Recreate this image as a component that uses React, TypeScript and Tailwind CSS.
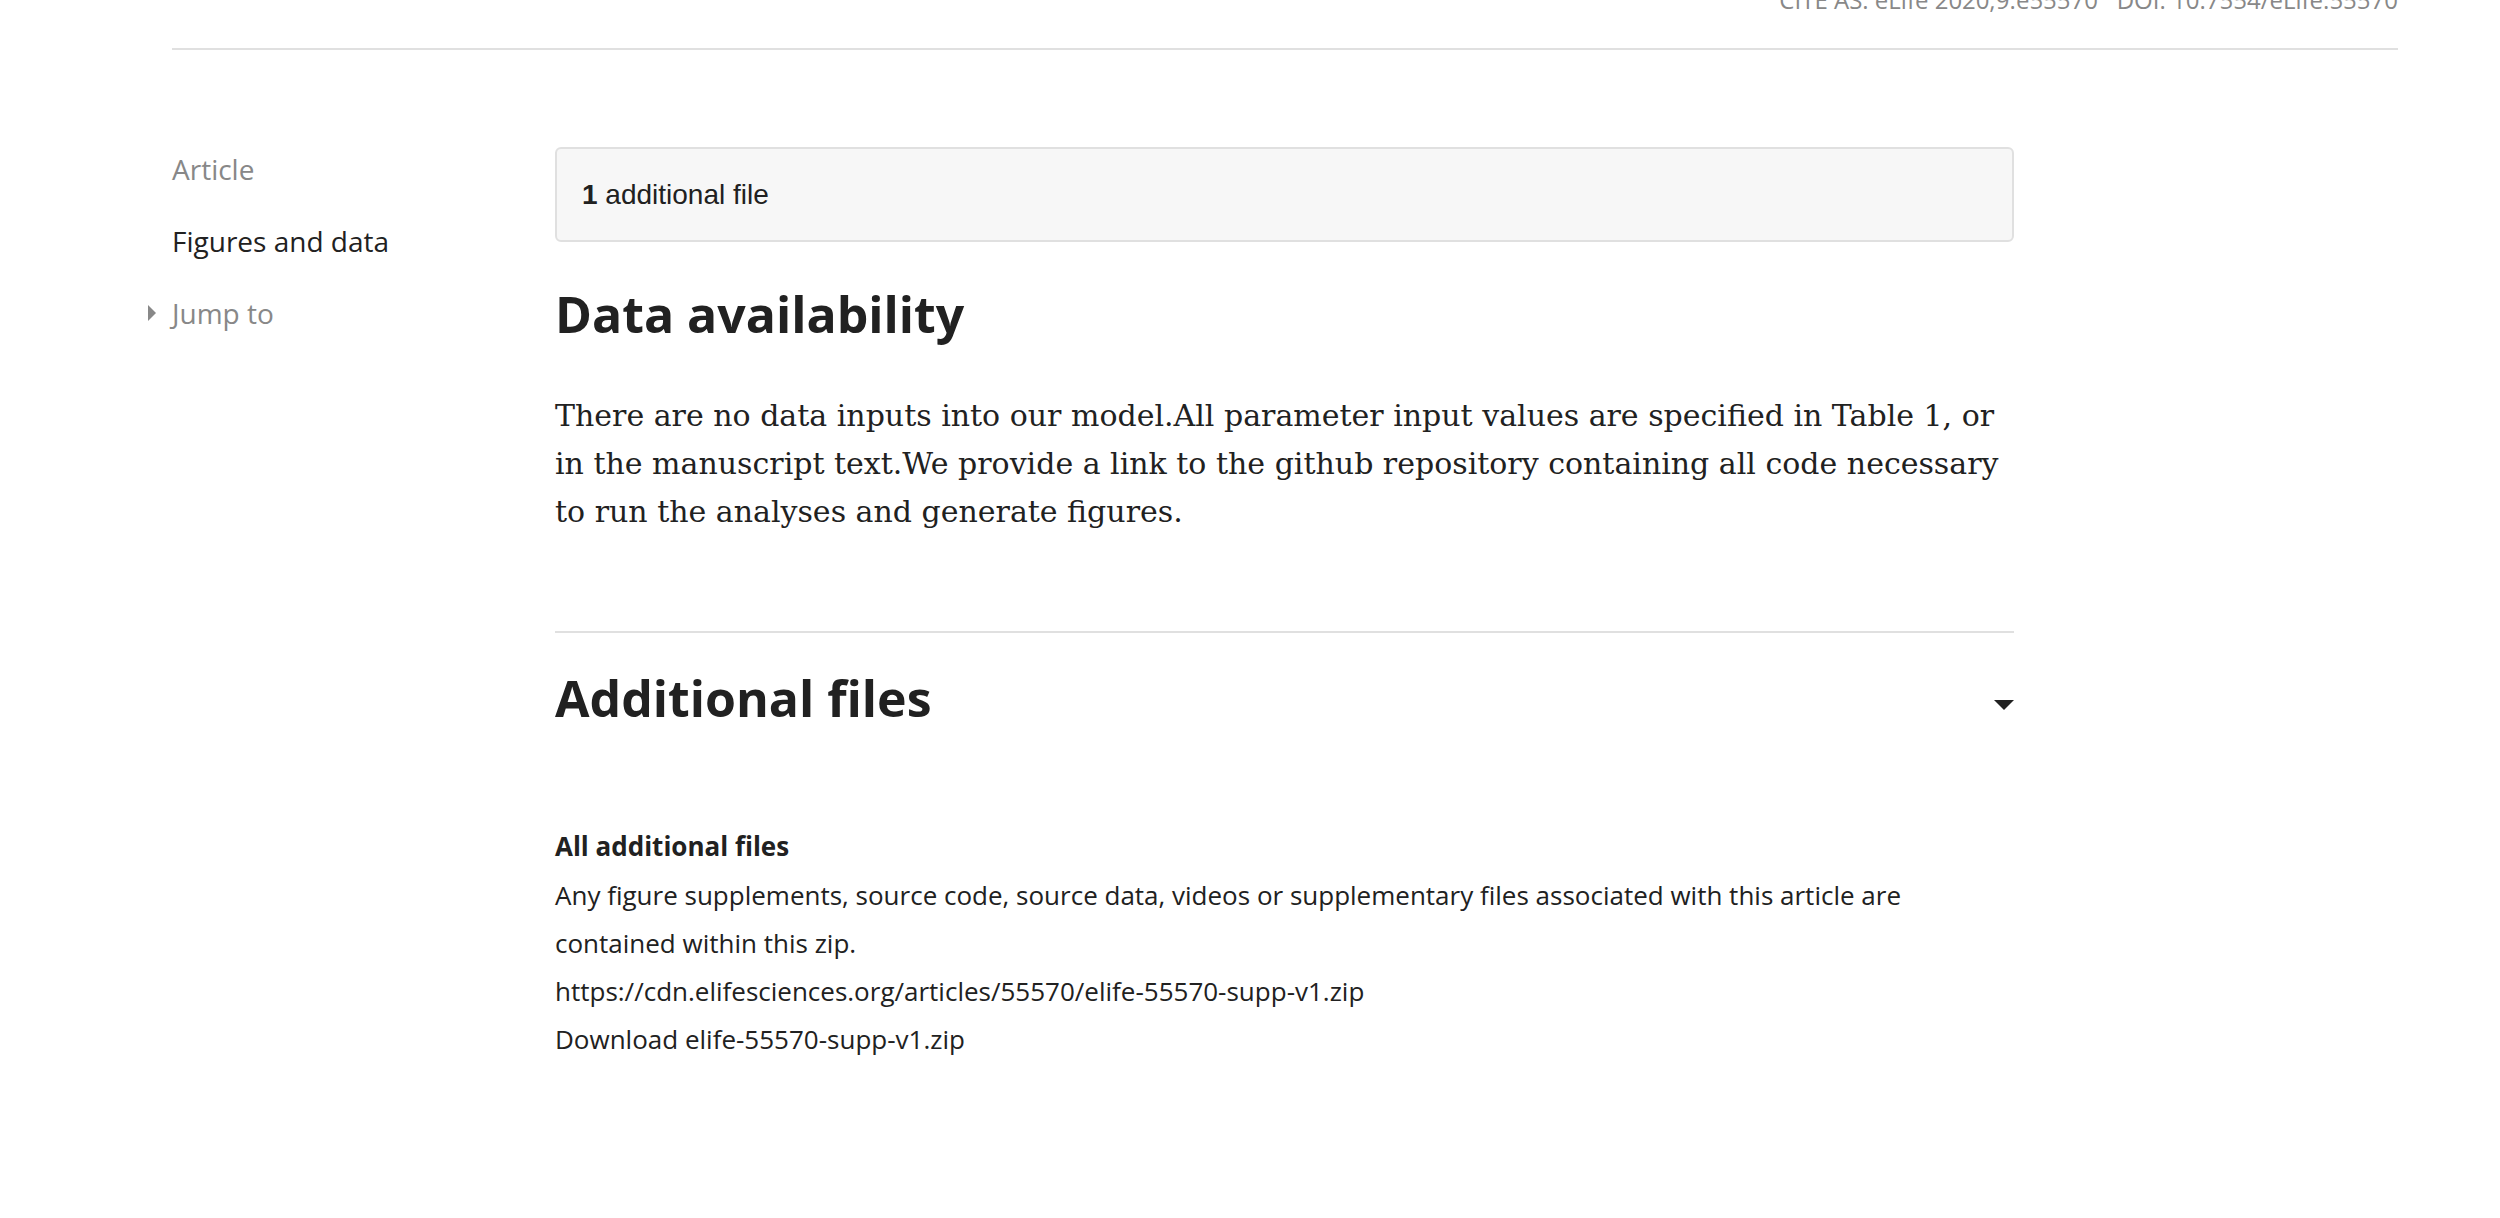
const sans = "font-['Open_Sans','Noto_Sans',sans-serif]"

function Nav() {
  return (
    <nav className={`w-[383px] shrink-0 pt-[83px] text-[28px] leading-[72px] ${sans}`}>
      <div className="text-[#888888]">Article</div>
      <div className="text-[#212121]">Figures and data</div>
      <div className="relative text-[#888888]">
        {/* jump to toggle arrow */}
        <span className="absolute left-[-24px] top-[28px] w-0 h-0 border-y-[8px] border-y-transparent border-l-[8px] border-l-[#888888]" />
        Jump to
      </div>
    </nav>
  )
}

export default function App() {
  return (
    <div className="min-h-screen bg-white text-[#212121] overflow-hidden">
      {/* top bar */}
      <header className="pl-[172px] pr-[102px]">
        <div className="h-[50px] border-b-2 border-[#e0e0e0] flex justify-end">
          <span className={`mt-[-12px] text-[24px] leading-[24px] text-[#888888] whitespace-pre ${sans}`}>
            CITE AS: eLife 2020;9:e55570   DOI: 10.7554/eLife.55570
          </span>
        </div>
      </header>

      <main className="flex pl-[172px]">
        <Nav />
        <div className="w-[1459px] pt-[97px] pb-[150px]">
          {/* files summary box */}
          <div className="h-[95px] border-2 border-[#e0e0e0] rounded-[6px] bg-[#f7f7f7] flex items-center pl-[25px] font-['Liberation_Sans',Arial,sans-serif] text-[28px] text-[#212121]">
            <span className="font-bold">1</span>&nbsp;additional file
          </div>

          <h2 className={`mt-[42px] text-[50px] leading-[60px] font-bold ${sans}`}>Data availability</h2>
          <p className="mt-[48px] font-['DejaVu_Serif',serif] text-[30px] leading-[48px]">
            There are no data inputs into our model.All parameter input values are specified in Table 1, or in the manuscript text.We provide a link to the github repository containing all code necessary to run the analyses and generate figures.
          </p>

          {/* additional files section */}
          <section className="mt-[95px] border-t-2 border-[#e0e0e0] pt-[35px]">
            <div className="flex justify-between items-center">
              <h2 className={`text-[50px] leading-[60px] font-bold ${sans}`}>Additional files</h2>
              <span className="mt-[13px] w-0 h-0 border-x-[10px] border-x-transparent border-t-[10px] border-t-[#212121]" />
            </div>
            <div className={`mt-[94px] text-[26px] leading-[48px] ${sans}`}>
              <div className="font-bold">All additional files</div>
              <div className="pt-[1px]">Any figure supplements, source code, source data, videos or supplementary files associated with this article are contained within this zip.</div>
              <div>https://cdn.elifesciences.org/articles/55570/elife-55570-supp-v1.zip</div>
              <div>Download elife-55570-supp-v1.zip</div>
            </div>
          </section>
        </div>
      </main>
    </div>
  )
}
